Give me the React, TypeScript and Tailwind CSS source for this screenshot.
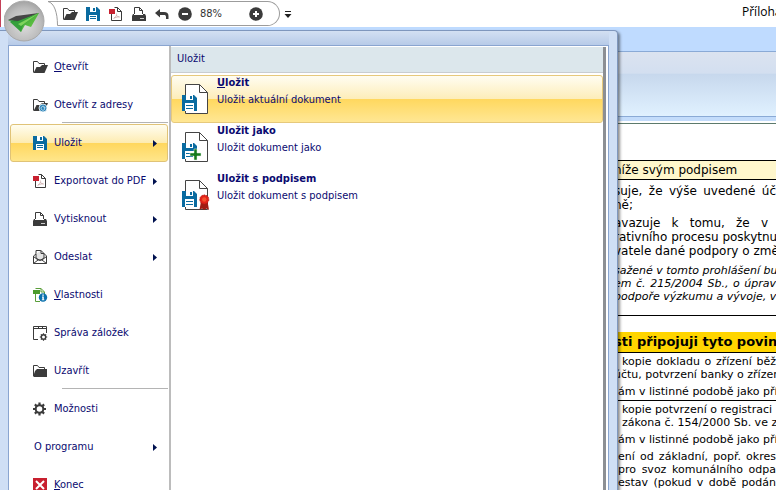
import type { ReactNode } from 'react';

interface MenuEntry {
  label: string;
  icon?: ReactNode;
  accessKey?: boolean;
  submenu?: boolean;
  active?: boolean;
  separator?: boolean;
}

interface SaveOption {
  title: string;
  accessIndex: number;
  description: string;
  badge?: 'plus' | 'seal';
  active?: boolean;
}

const DARK = '#3b3b3b';
const BLUE = '#0a6ba0';

function FolderIcon({ closed, web }: { closed?: boolean; web?: boolean }) {
  return (
    <svg width="16" height="14" viewBox="0 0 16 14" fill="none">
      <path d="M1.5 12.5V1.5H5.5L7 3.5H12.5V6" stroke={DARK} />
      {closed ? (
        <path d="M3 7L5 5H15V13H2V10Z" fill={DARK} />
      ) : (
        <path d="M1.5 13L4.5 7H8L10 5H16L12.5 13Z" fill={DARK} />
      )}
      {web && (
        <>
          <circle cx="11" cy="10" r="4" fill="#2b83b8" stroke="#fff" strokeWidth="0.8" />
          <path d="M12.8 11.2a2 2 0 1 1 .2-1.4c0 1-.9 1-.9.2V8.8" stroke="#d5ebf7" strokeWidth="0.8" />
        </>
      )}
    </svg>
  );
}

function SaveIcon() {
  return (
    <svg width="16" height="14" viewBox="0 0 16 14">
      <path d="M1 0H12L15 3V14H1Z" fill={BLUE} />
      <path d="M5 0H11V5H5Z" fill="#fff" />
      <path d="M8 1H10V4H8Z" fill={BLUE} />
      <path d="M4 8H12V14H4Z" fill="#fff" />
      <path d="M5 9H11V10H5ZM5 11H11V12H5Z" fill={BLUE} />
    </svg>
  );
}

function PdfIcon() {
  return (
    <svg width="16" height="14" viewBox="0 0 16 14" fill="none">
      <path d="M3.5 6V13.5H13.5V4.5L9.5 0.5H6.5" stroke={DARK} />
      <path d="M9.5 0.5V4.5H13.5" stroke={DARK} />
      <path d="M1 2H7V7H1Z" fill="#c8202f" />
      <path d="M5.5 11.5C8 10 9 8 8.5 6.5M8.5 8C9 9.5 10 10.2 12 10M6 11L11 9.5" stroke="#c9a5a5" strokeWidth="0.7" />
    </svg>
  );
}

function PrintIcon() {
  return (
    <svg width="16" height="14" viewBox="0 0 16 14" fill="none">
      <path d="M3.5 7V0.5H8.5L11.5 3.5V7M8.5 0.5V3.5H11.5" stroke={DARK} />
      <path d="M2 7H3V8H12V7H14L15 9V14H1V9Z" fill={DARK} />
      <path d="M9 11.5H13" stroke="#ccc" />
    </svg>
  );
}

function MailIcon() {
  return (
    <svg width="16" height="14" viewBox="0 0 16 14" fill="none">
      <path d="M1.5 6L4 4V0.5H9L12 3.5L14.5 6V13.5H1.5Z" fill="#fff" stroke={DARK} />
      <path d="M4 4V8L8 10.5L12 8V3.5H9V0.5" fill="#e4e4e4" stroke={DARK} />
      <path d="M1.5 6.5L6 10L1.5 13.5M14.5 6.5L10 10L14.5 13.5M6 10H10" stroke={DARK} />
    </svg>
  );
}

function InfoIcon() {
  return (
    <svg width="16" height="14" viewBox="0 0 16 14" fill="none">
      <path d="M3.5 4V13.5H8M3.5 0.5H9L12.5 4V6M9 0.5V4H12" stroke="#5a9e3a" />
      <path d="M1 2H8V6H1Z" fill="#4b9b2c" />
      <circle cx="11" cy="9.5" r="4.2" fill="#0b71ad" />
      <path d="M10.3 6.5H11.8V7.8H10.3ZM10 8.6H11.8V11.4H12.4V12.2H9.8V11.4H10.4V9.4H10Z" fill="#fff" />
    </svg>
  );
}

function BookmarksIcon() {
  return (
    <svg width="16" height="16" viewBox="0 0 16 16" fill="none">
      <path d="M6 14.5H1.5V1.5H14.5V8M1.5 3.5H14.5M6.5 1V3.5M10.5 1V3.5" stroke={DARK} />
      <circle cx="11.5" cy="12" r="2.2" stroke={DARK} strokeWidth="1.4" />
      <path
        d="M11.5 8.3V9.8M11.5 14.2V15.7M7.8 12H9.3M13.7 12H15.2M8.9 9.4L10 10.5M13 13.5L14.1 14.6M8.9 14.6L10 13.5M13 10.5L14.1 9.4"
        stroke={DARK}
        strokeWidth="1.2"
      />
    </svg>
  );
}

function GearIcon() {
  return (
    <svg width="16" height="14" viewBox="0 0 16 14" fill="none" stroke={DARK}>
      <circle cx="7.5" cy="7" r="3.8" strokeWidth="2" />
      <path
        d="M7.5 0.5V3M7.5 11V13.5M1 7H3.5M11.5 7H14M2.9 2.4L4.7 4.2M10.3 9.8L12.1 11.6M2.9 11.6L4.7 9.8M10.3 4.2L12.1 2.4"
        strokeWidth="2.2"
      />
    </svg>
  );
}

function ExitIcon() {
  return (
    <svg width="16" height="14" viewBox="0 0 16 14">
      <path d="M1 0H15V14H1Z" fill="#c8202f" />
      <path d="M4 3L12 11M12 3L4 11" stroke="#fff" strokeWidth="2" />
    </svg>
  );
}

function UndoIcon() {
  return (
    <svg width="16" height="14" viewBox="0 0 16 14">
      <path d="M1 6L6 2V5H10C13 5 14.5 6.5 14.5 9V12H12V10C12 8.5 11.2 8 10 8H6V10.5Z" fill={DARK} />
    </svg>
  );
}

function ZoomIcon({ plus }: { plus?: boolean }) {
  return (
    <svg width="14" height="14" viewBox="0 0 14 14">
      <circle cx="7" cy="7" r="6.8" fill={DARK} />
      <path d={plus ? 'M4 7H10M7 4V10' : 'M4 7H10'} stroke="#fff" strokeWidth="2" />
    </svg>
  );
}

function DocumentIcon({ badge }: { badge?: 'plus' | 'seal' }) {
  return (
    <svg width="28" height="32" viewBox="0 0 28 32" fill="none">
      <path d="M3.5 1.5H17.5L25.5 9.5V30.5H3.5Z" fill="#fff" stroke="#444" />
      <path d="M17.5 1.5V9.5H25.5" stroke="#444" />
      <path d="M0 12H12L15 15V28H0Z" fill={BLUE} />
      <path d="M4 12H11V17H4ZM3 20H12V28H3Z" fill="#fff" />
      <path d="M8 13H10V16H8ZM4 22H11V23H4ZM4 25H11V26H4Z" fill={BLUE} />
      {badge === 'plus' && <path d="M12 18H15V22H19V25H15V29H12V25H8V22H12Z" fill="#157a1c" stroke="#e3f2e0" strokeWidth="0.5" />}
      {badge === 'seal' && (
        <>
          <path d="M19 22L17.5 31L20 29.5L22 31L24.5 29.5L27 31L25.5 22Z" fill="#a01c14" />
          <circle cx="22.3" cy="20.5" r="4.5" fill="#e2231a" stroke="#b81d14" strokeDasharray="1.5 1" />
          <circle cx="22.3" cy="20.5" r="2.2" fill="#f4532f" />
        </>
      )}
    </svg>
  );
}

const TOOLBAR = [
  { label: 'Otevřít', icon: <FolderIcon /> },
  { label: 'Uložit', icon: <SaveIcon /> },
  { label: 'Exportovat do PDF', icon: <PdfIcon /> },
  { label: 'Vytisknout', icon: <PrintIcon /> },
  { label: 'Zpět', icon: <UndoIcon /> },
  { label: 'Zmenšit', icon: <ZoomIcon /> },
];

const MENU: MenuEntry[] = [
  { label: 'Otevřít', icon: <FolderIcon />, accessKey: true },
  { label: 'Otevřít z adresy', icon: <FolderIcon web /> },
  { label: 'Uložit', icon: <SaveIcon />, submenu: true, active: true, separator: true },
  { label: 'Exportovat do PDF', icon: <PdfIcon />, submenu: true },
  { label: 'Vytisknout', icon: <PrintIcon />, submenu: true },
  { label: 'Odeslat', icon: <MailIcon />, submenu: true },
  { label: 'Vlastnosti', icon: <InfoIcon />, accessKey: true },
  { label: 'Správa záložek', icon: <BookmarksIcon /> },
  { label: 'Uzavřít', icon: <FolderIcon closed /> },
  { label: 'Možnosti', icon: <GearIcon />, separator: true },
  { label: 'O programu', submenu: true },
  { label: 'Konec', icon: <ExitIcon />, accessKey: true },
];

const SAVE_OPTIONS: SaveOption[] = [
  { title: 'Uložit', accessIndex: 0, description: 'Uložit aktuální dokument', active: true },
  { title: 'Uložit jako', accessIndex: 7, description: 'Uložit dokument jako', badge: 'plus' },
  { title: 'Uložit s podpisem', accessIndex: -1, description: 'Uložit dokument s podpisem', badge: 'seal' },
];

function AppButton() {
  return (
    <button aria-label="Hlavní nabídka" className="absolute top-0 left-1 z-20 size-[42px]">
      <svg width="42" height="42" viewBox="0 0 42 42">
        <defs>
          <radialGradient id="orb" cx="50%" cy="60%" r="60%">
            <stop offset="0" stopColor="#dedede" />
            <stop offset="0.7" stopColor="#bcbcbc" />
            <stop offset="1" stopColor="#a2a2a2" />
          </radialGradient>
          <linearGradient id="wing" x1="0" y1="0" x2="1" y2="1">
            <stop offset="0" stopColor="#2f9a35" />
            <stop offset="1" stopColor="#74d247" />
          </linearGradient>
        </defs>
        <circle cx="20" cy="21" r="20" fill="url(#orb)" stroke="#a9a9a9" />
        <path d="M4 20L12 16L35 13L16 22Z" fill="#464646" />
        <path d="M4 20L14 21L35 13L14 26Z" fill="#2d9938" />
        <path d="M13 22L35 13L27 27L21 25L17 32Z" fill="url(#wing)" />
        <path d="M6 22L14 22L35 13L19 25L17 32Z" fill="#35a03c" />
        <path d="M14 24L35 13L17 26Z" fill="#7fd45c" />
      </svg>
    </button>
  );
}

function QuickAccess() {
  return (
    <header className="flex h-[27px] items-start justify-between border-l border-[#c44058] bg-white pl-[47px]">
      <div className="flex items-center">
        <svg width="10" height="26" viewBox="0 0 10 26" fill="none" className="shrink-0">
          <path d="M0 1.5C6 3 9.5 12 9.5 25.5H10M0 1.5H10" stroke="#9c9c9c" />
        </svg>
        <div className="mt-px flex h-[25px] w-[222px] items-center rounded-r-full border border-l-0 border-[#9c9c9c]">
          {TOOLBAR.map((tool) => (
            <button key={tool.label} aria-label={tool.label} className="flex w-[23px] justify-center">
              {tool.icon}
            </button>
          ))}
          <span className="ml-1 grow pt-0.5 text-[11px] text-[#333]">88%</span>
          <button aria-label="Zvětšit" className="mr-4">
            <ZoomIcon plus />
          </button>
        </div>
        <button aria-label="Přizpůsobit panel" className="mt-1 ml-1">
          <svg width="8" height="8" viewBox="0 0 8 8">
            <path d="M1 0H7V1H1ZM0.5 3H7.5L4 7Z" fill="#222" />
          </svg>
        </button>
      </div>
      <h1 className="w-[34px] shrink-0 overflow-hidden font-['Open_Sans',sans-serif] text-[12px] leading-6 whitespace-nowrap text-black">
        Příloha
      </h1>
    </header>
  );
}

function MenuItem({ item }: { item: MenuEntry }) {
  return (
    <li className="relative">
      {item.separator && <hr className="absolute -top-0.5 right-0 left-[52px] border-[#b4b4b4]" />}
      <button
        className={`flex h-[38px] w-full items-center rounded-[3px] border pr-2.5 pl-[21px] text-left ${
          item.active
            ? 'border-[#e0c377] bg-[linear-gradient(#fffdf0,#fdebb0_50%,#ffd75e_51%,#ffe68b)]'
            : 'border-transparent'
        }`}
      >
        {item.icon && <span className="mr-1.5 flex w-4 justify-center">{item.icon}</span>}
        <span className={`grow whitespace-nowrap ${item.icon ? '' : 'pl-0.5'}`}>
          {item.accessKey ? (
            <>
              <u>{item.label[0]}</u>
              {item.label.slice(1)}
            </>
          ) : (
            item.label
          )}
        </span>
        {item.submenu && (
          <svg width="4" height="7" viewBox="0 0 4 7">
            <path d="M0 0L4 3.5L0 7Z" fill="#00114f" />
          </svg>
        )}
      </button>
    </li>
  );
}

function SaveOptionItem({ option }: { option: SaveOption }) {
  const { title, accessIndex: i } = option;
  return (
    <li>
      <button
        className={`flex h-12 w-full items-start rounded-[3px] border pl-2.5 text-left ${
          option.active
            ? 'border-[#e6c97c] bg-[linear-gradient(#fffdf2,#fdedb8_50%,#ffd85f_51%,#ffe794)]'
            : 'border-transparent'
        }`}
      >
        <span className="mt-[7px] mr-[7px]">
          <DocumentIcon badge={option.badge} />
        </span>
        <span className="flex flex-col gap-1 leading-[13px]">
          <b>
            {i < 0 ? (
              title
            ) : (
              <>
                {title.slice(0, i)}
                <u>{title[i]}</u>
                {title.slice(i + 1)}
              </>
            )}
          </b>
          <span>{option.description}</span>
        </span>
      </button>
    </li>
  );
}

function ApplicationMenu() {
  return (
    <nav className="absolute top-[30px] left-0 z-10 w-[618px] rounded-tr-sm border-t border-r border-[#7f97bd] bg-[#cfdff5] pr-2 pl-2 text-[11px] text-[#0a0a70] shadow-[2px_2px_3px_rgba(0,0,0,0.45)]">
      <div className="h-3.5 bg-linear-to-b from-[#d3e0f2] to-[#b7cbe8]" />
      <div className="flex border border-b-0 border-[#8aa5d0] bg-white">
        <ul className="w-[162px] shrink-0 border-r-2 border-[#bcbcbc] px-px pt-0.5">
          {MENU.map((item) => (
            <MenuItem key={item.label} item={item} />
          ))}
        </ul>
        <section className="mt-px mr-0.5 grow border-r-3 border-[#8c8f94]">
          <h2 className="h-[26px] border-b border-[#c9cdd0] bg-[#dce7ec] pl-1.5 leading-6">Uložit</h2>
          <ul className="pt-0.5">
            {SAVE_OPTIONS.map((option) => (
              <SaveOptionItem key={option.title} option={option} />
            ))}
          </ul>
        </section>
      </div>
    </nav>
  );
}

function Line({ children, justify }: { children: ReactNode; justify?: boolean }) {
  return <span className={`block whitespace-nowrap ${justify ? '[text-align-last:justify]' : ''}`}>{children}</span>;
}

function DocumentPage() {
  return (
    <main className="overflow-hidden pt-9 pl-[614px] font-['DejaVu_Sans',sans-serif] text-[11px] leading-[13px] text-black">
      <h3 className="border-y border-black bg-[#fff7cc] text-[12px] leading-[18px]">níže svým podpisem</h3>
      <div className="text-[12px] leading-[14px]">
        <p className="pt-1">
          <Line justify>suje, že výše uvedené úč</Line>
          <Line>ně;</Line>
        </p>
        <div className="pt-1">
          <p className="pr-2">
            <Line justify>avazuje k tomu, že v</Line>
          </p>
          <Line justify>rativního procesu poskytnu</Line>
          <Line>vatele dané podpory o změn</Line>
        </div>
      </div>
      <p className="border-b border-black pt-1.5 pb-3 italic">
        <Line justify>sažené v tomto prohlášení bu</Line>
        <Line justify>em č. 215/2004 Sb., o úprav</Line>
        <Line justify>podpoře výzkumu a vývoje, v</Line>
      </p>
      <h3 className="mt-4 border-b border-black bg-[#ffd500] text-[13px] leading-5 font-bold whitespace-nowrap">
        sti připojuji tyto povin
      </h3>
      <div className="border-b border-black pt-0.5 pb-0.5">
        <p className="pl-2">
          <Line justify>kopie dokladu o zřízení běž</Line>
        </p>
        <Line>účtu, potvrzení banky o zřízení</Line>
        <p className="pt-1 pl-1">
          <Line>ám v listinné podobě jako příl</Line>
        </p>
      </div>
      <div className="pt-0.5">
        <div className="pl-2">
          <p className="pr-1">
            <Line justify>kopie potvrzení o registraci</Line>
          </p>
          <Line>zákona č. 154/2000 Sb. ve zn</Line>
        </div>
        <p className="pt-1 pl-1">
          <Line>ám v listinné podobě jako příl</Line>
        </p>
        <p className="pt-1 pl-1">
          <Line justify>ení od základní, popř. okres</Line>
          <Line justify>pro svoz komunálního odpa</Line>
          <Line justify>estav (pokud v době podán</Line>
        </p>
      </div>
    </main>
  );
}

export default function App() {
  return (
    <div className="relative h-screen overflow-hidden bg-white font-['DejaVu_Sans_Condensed','DejaVu_Sans',sans-serif]">
      <QuickAccess />
      <AppButton />
      <ApplicationMenu />
      <div className="h-6 bg-[#bfdbff]" />
      <div className="h-[66px] border-y border-[#8aaad6] bg-[linear-gradient(#dbe3f0,#d3dff0_33%,#c7d8ed_35%,#e0f1ff)]" />
      <div className="h-1.5 border-b-2 border-white bg-[#c3dcfb]" />
      <div className="border-t border-[#5c7a6c]" />
      <DocumentPage />
    </div>
  );
}
